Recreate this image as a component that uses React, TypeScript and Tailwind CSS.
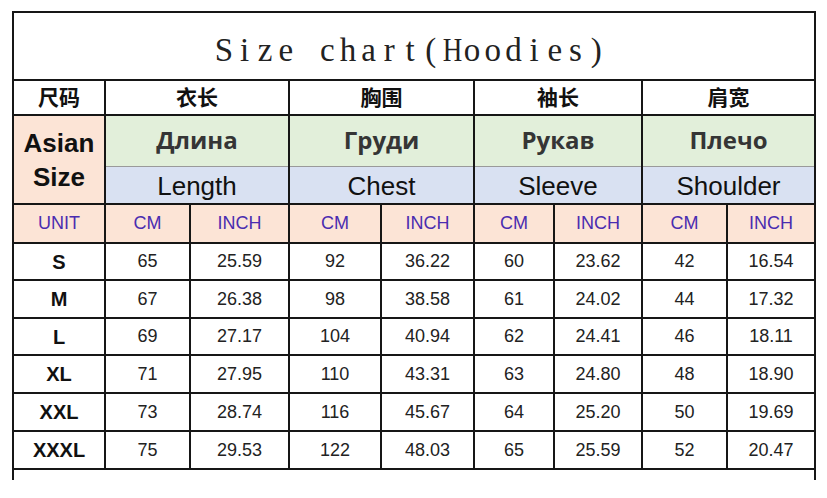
import React from "react";

const PEACH = "bg-[#fce4d6]";
const rows: [string, string[]][] = [
  ["S", ["65", "25.59", "92", "36.22", "60", "23.62", "42", "16.54"]],
  ["M", ["67", "26.38", "98", "38.58", "61", "24.02", "44", "17.32"]],
  ["L", ["69", "27.17", "104", "40.94", "62", "24.41", "46", "18.11"]],
  ["XL", ["71", "27.95", "110", "43.31", "63", "24.80", "48", "18.90"]],
  ["XXL", ["73", "28.74", "116", "45.67", "64", "25.20", "50", "19.69"]],
  ["XXXL", ["75", "29.53", "122", "48.03", "65", "25.59", "52", "20.47"]],
];

const groups: [string, string, string][] = [
  ["衣长", "Длина", "Length"],
  ["胸围", "Груди", "Chest"],
  ["袖长", "Рукав", "Sleeve"],
  ["肩宽", "Плечо", "Shoulder"],
];

const sans = "font-['Liberation_Sans',Arial,sans-serif]";
const cjk = "font-['Liberation_Sans','Noto_Sans_CJK_SC',sans-serif]";
const title = "Size chart(Hoodies)";

export default function App() {
  return (
    <div className="w-[827px] h-[498px] bg-white overflow-hidden pt-[11px] pl-[12px]">
      <div className="grid w-[804px] bg-[#161616] p-[2px] gap-[2px] grid-cols-[90px_83px_97px_90px_91px_78px_86px_83px_86px] grid-rows-[66px_33px_87px_37px_35px_36px_35px_36px_36px_36px]">
        {/* Title */}
        <div className="col-span-9 bg-white flex items-center justify-center pt-[8px] pr-[8px]">
          <span className="flex font-['Liberation_Serif','Times_New_Roman',serif] text-[33px] leading-none text-[#222]">
            {title.split("").map((ch, i) => (
              <span
                key={i}
                className={
                  ch === "H"
                    ? "inline-block w-[20.7px] text-center scale-x-[0.82]"
                    : "inline-block w-[20.7px] text-center"
                }
              >
                {ch === " " ? "\u00a0" : ch}
              </span>
            ))}
          </span>
        </div>

        {/* Chinese row */}
        <div className={`bg-white flex items-center justify-center ${cjk} font-bold text-[21px] text-[#111]`}>
          尺码
        </div>
        {groups.map(([zh]) => (
          <div
            key={zh}
            className={`col-span-2 bg-white flex items-center justify-center ${cjk} font-bold text-[21px] text-[#111]`}
          >
            {zh}
          </div>
        ))}

        {/* Asian size + Russian/English */}
        <div className={`${PEACH} flex flex-col items-center justify-center ${sans} font-bold text-[26px] leading-[34px] text-[#111]`}>
          <span>Asian</span>
          <span>Size</span>
        </div>
        {groups.map(([zh, ru, en]) => (
          <div key={zh + "x"} className="col-span-2 flex flex-col bg-white">
            <div className="h-[50px] bg-[#e2efda] flex items-center justify-center font-['Open_Sans',sans-serif] font-bold text-[24px] text-[#353535] pb-[2px]">
              {ru}
            </div>
            <div className="h-px bg-[#9a9a9a]" />
            <div className={`flex-1 bg-[#d9e1f2] flex items-center justify-center ${sans} text-[26px] leading-none text-[#111] pt-[1px]`}>
              {en}
            </div>
          </div>
        ))}

        {/* Unit row */}
        <div className={`${PEACH} flex items-center justify-center ${sans} text-[18px] text-[#4a2cb0]`}>UNIT</div>
        {groups.map(([zh]) => (
          <React.Fragment key={zh + "u"}>
            <div className={`${PEACH} flex items-center justify-center ${sans} text-[18px] text-[#4a2cb0]`}>CM</div>
            <div className={`${PEACH} flex items-center justify-center ${sans} text-[18px] text-[#4a2cb0]`}>INCH</div>
          </React.Fragment>
        ))}

        {/* Data rows */}
        {rows.map(([size, vals]) => (
          <React.Fragment key={size}>
            <div className={`bg-white flex items-center justify-center ${sans} font-bold text-[20px] text-[#111]`}>
              {size}
            </div>
            {vals.map((v, i) => (
              <div key={i} className={`bg-white flex items-center justify-center ${sans} text-[18px] text-[#222]`}>
                {v}
              </div>
            ))}
          </React.Fragment>
        ))}
      </div>
      <div className="w-[804px] h-[10px] border-x-2 border-[#161616]" />
    </div>
  );
}
